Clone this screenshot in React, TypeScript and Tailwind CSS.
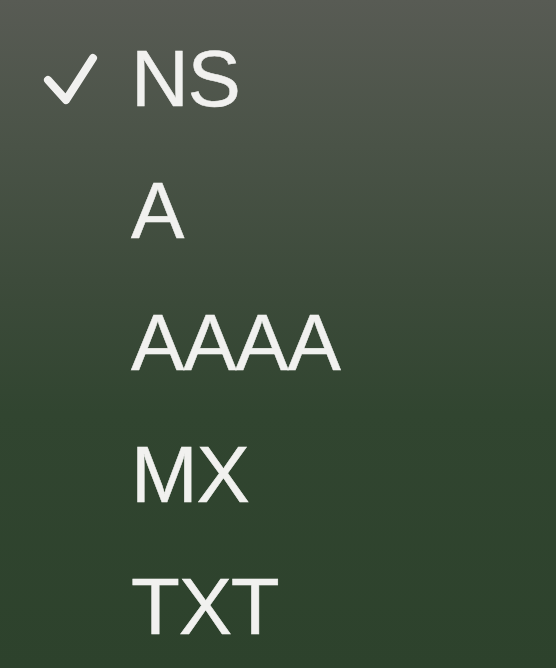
const items = ['NS', 'A', 'AAAA', 'MX', 'TXT'];

export default function App() {
  const selected = 'NS';

  return (
    <div className="w-[556px] h-[668px] overflow-hidden bg-[linear-gradient(180deg,#585b54_0%,#4a5347_22%,#3d4b3b_42%,#314530_62%,#2d422c_100%)] pt-[13px] font-['Liberation_Sans',Arial,sans-serif] text-[#f1f1ef]">
      {items.map(item => (
        <div key={item} className="flex h-[132px] items-center">
          <div className="w-[131px] h-[132px] shrink-0">
            {item === selected && (
              <svg width="131" height="132" viewBox="0 0 131 132" fill="none">
                <path
                  d="M48 67 L66 87 L93 45"
                  stroke="#f1f1ef"
                  strokeWidth="8"
                  strokeLinecap="round"
                  strokeLinejoin="round"
                />
              </svg>
            )}
          </div>
          <span className="text-[80px] leading-[132px] tracking-[-0.015em] [-webkit-text-stroke:0.5px_#f1f1ef]">{item}</span>
        </div>
      ))}
    </div>
  );
}
